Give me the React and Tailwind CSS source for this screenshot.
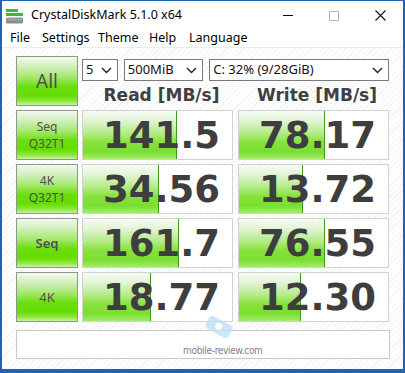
import React from 'react';

const rows = [
  { label: ['Seq', 'Q32T1'], read: '141.5', readBar: 94, write: '78.17', writeBar: 86 },
  { label: ['4K', 'Q32T1'], read: '34.56', readBar: 76, write: '13.72', writeBar: 64 },
  { label: ['Seq'], read: '161.7', readBar: 96, write: '76.55', writeBar: 86, bold: true },
  { label: ['4K'], read: '18.77', readBar: 68, write: '12.30', writeBar: 62 },
];

const btnGreen =
  'bg-[linear-gradient(to_bottom,#f2f8ee_0%,#d6f0c4_18%,#a4e86c_42%,#6ade0c_62%,#66dc00_80%,#8ee840_92%,#c8f2a4_100%)]';

const Chevron = () => (
  <svg width="11" height="7" viewBox="0 0 11 7" className="shrink-0">
    <path d="M1 1 L5.5 5.5 L10 1" fill="none" stroke="#222" strokeWidth="1.4" />
  </svg>
);

const Select = ({ value, className }) => (
  <div
    className={`h-[22px] border border-[#7a7a7a] bg-white flex items-center justify-between pl-[3px] pr-[5px] text-[13px] text-[#111] ${className}`}
  >
    <span>{value}</span>
    <Chevron />
  </div>
);

const ScoreCell = ({ value, bar }) => (
  <div className="relative h-[50px] border border-[#d2d2d2] bg-white overflow-hidden">
    <div
      className="absolute left-0 top-0 bottom-0 border-r border-[#3f9a1c] bg-[linear-gradient(to_bottom,#f6fbf3_0%,#e2f4d6_20%,#b6ec8a_45%,#86e23e_65%,#7ade2e_85%,#a4ec6c_100%)]"
      style={{ width: bar }}
    />
    <div className="relative h-full flex items-center justify-center pl-[8px] font-['DejaVu_Sans',sans-serif] font-bold text-[37px] leading-none text-[#3e3e3e]">
      {value}
    </div>
  </div>
);

const LabelButton = ({ lines, bold }) => (
  <div
    className={`h-[50px] border border-[#8b9b88] ${btnGreen} flex flex-col items-center justify-center leading-[17px] text-[#505050] ${
      lines.length > 1 ? 'text-[12px]' : 'text-[13px]'
    } ${bold ? 'font-semibold' : ''}`}
  >
    {lines.map((l) => (
      <span key={l}>{l}</span>
    ))}
  </div>
);

const DiskIcon = () => (
  <svg width="17" height="15" viewBox="0 0 17 15">
    <rect x="0" y="0" width="12" height="3" fill="#3cb83c" />
    <rect x="0" y="4" width="17" height="3" fill="#3cb83c" />
    <rect x="0" y="8.5" width="17" height="6" rx="1.5" fill="#8a8a8a" />
    <rect x="1" y="9.5" width="15" height="2" fill="#a6a6a6" />
    <rect x="12" y="11" width="3" height="2" fill="#46d046" />
  </svg>
);

export default function App() {
  return (
    <div className="w-[405px] h-[373px] bg-[#1d64b8] flex flex-col font-['Noto_Sans','Open_Sans',sans-serif] overflow-hidden">
      <div className="mx-[2px] mt-[1px] flex-1 flex flex-col bg-white">
        {/* Title bar */}
        <div className="h-[29px] flex items-center bg-white">
          <div className="ml-[4px] mt-[1px]">
            <DiskIcon />
          </div>
          <span className="ml-[8px] text-[12.5px] text-black">CrystalDiskMark 5.1.0 x64</span>
          <div className="ml-auto flex items-center h-full">
            <div className="w-[46px] flex justify-center">
              <div className="w-[10px] h-[1px] bg-black" />
            </div>
            <div className="w-[46px] flex justify-center">
              <div className="w-[10px] h-[10px] border border-[#b4b4b4]" />
            </div>
            <div className="w-[46px] flex justify-center">
              <svg width="11" height="11" viewBox="0 0 11 11">
                <path d="M0.5 0.5 L10.5 10.5 M10.5 0.5 L0.5 10.5" stroke="#111" strokeWidth="1.1" />
              </svg>
            </div>
          </div>
        </div>

        {/* Menu */}
        <div className="h-[18px] flex items-center text-[12.5px] text-black border-b border-[#ececec]">
          <span className="ml-[8px] w-[32px]">File</span>
          <span className="w-[56px]">Settings</span>
          <span className="w-[51px]">Theme</span>
          <span className="w-[40px]">Help</span>
          <span>Language</span>
        </div>

        {/* Content */}
        <div className="relative flex-1 pl-[14px] pr-[13px] pt-[8px] bg-[repeating-linear-gradient(135deg,#ffffff_0px,#ffffff_3px,#f2f2f2_3px,#f2f2f2_4px)]">
          <div className="grid grid-cols-[62px_151px_152px] gap-x-[4px] gap-y-[4px]">
            <div
              className={`h-[50px] border border-[#8b9b88] ${btnGreen} flex items-center justify-center text-[19px] text-[#505050]`}
            >
              All
            </div>
            <div className="col-span-2 h-[50px] flex flex-col">
              <div className="mt-[3px] flex gap-[6px]">
                <Select value="5" className="w-[36px]" />
                <Select value="500MiB" className="w-[80px]" />
                <Select value="C: 32% (9/28GiB)" className="w-[181px]" />
              </div>
              <div className="flex mt-[3px] font-['DejaVu_Sans',sans-serif] font-bold text-[17px] text-[#404040] leading-[22px]">
                <div className="w-[151px] text-center pl-[8px]">Read [MB/s]</div>
                <div className="w-[156px] text-center pl-[12px]">Write [MB/s]</div>
              </div>
            </div>

            {rows.map((r) => (
              <React.Fragment key={r.read}>
                <LabelButton lines={r.label} bold={r.bold} />
                <ScoreCell value={r.read} bar={r.readBar} />
                <div className="pl-[1px]">
                  <ScoreCell value={r.write} bar={r.writeBar} />
                </div>
              </React.Fragment>
            ))}
          </div>

          <div className="mt-[8px] h-[29px] border border-[#c9c9c9] bg-white" />

          {/* watermark */}
          <div className="absolute left-[204px] top-[272px] w-[26px] h-[14px] rounded-[4px] bg-[#bfe2f6] rotate-[28deg] opacity-80">
            <div className="absolute left-[9px] top-[3px] w-[7px] h-[7px] rounded-full bg-white" />
          </div>
          <div className="absolute left-[181px] top-[295px] text-[10px] tracking-[-0.3px] text-[#7d828c] font-['DejaVu_Sans_Condensed','Liberation_Sans',sans-serif]">
            mobile-review.com
          </div>
        </div>
      </div>
      <div className="h-[4px]" />
    </div>
  );
}
